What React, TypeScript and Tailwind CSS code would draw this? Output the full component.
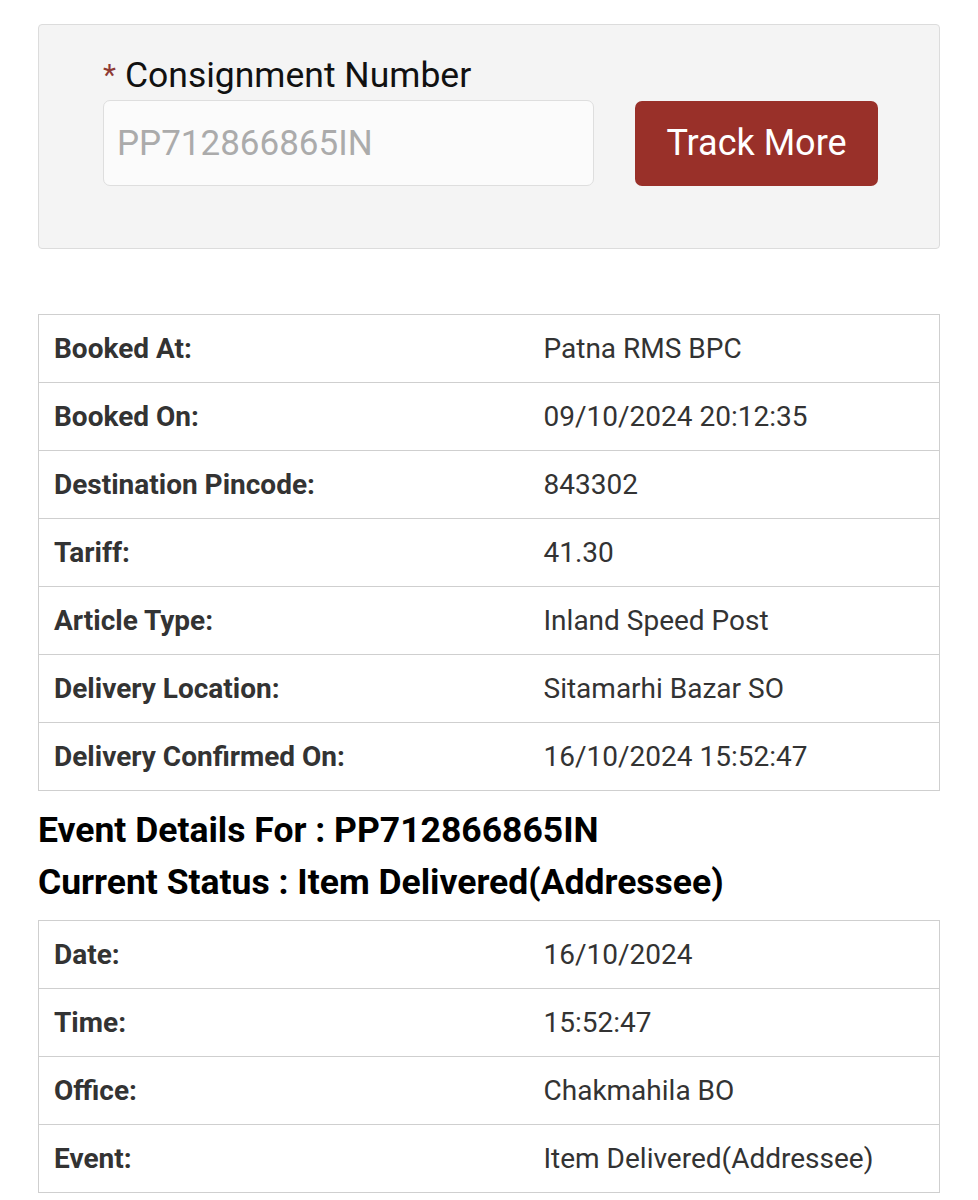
import React from 'react';

const bookingRows: [string, string][] = [
  ['Booked At:', 'Patna RMS BPC'],
  ['Booked On:', '09/10/2024 20:12:35'],
  ['Destination Pincode:', '843302'],
  ['Tariff:', '41.30'],
  ['Article Type:', 'Inland Speed Post'],
  ['Delivery Location:', 'Sitamarhi Bazar SO'],
  ['Delivery Confirmed On:', '16/10/2024 15:52:47'],
];

const eventRows: [string, string][] = [
  ['Date:', '16/10/2024'],
  ['Time:', '15:52:47'],
  ['Office:', 'Chakmahila BO'],
  ['Event:', 'Item Delivered(Addressee)'],
];

const DetailTable: React.FC<{ rows: [string, string][] }> = ({ rows }) => (
  <table className="w-full border-collapse border border-[#cfcfcf] text-[28px] text-[#333]">
    <tbody>
      {rows.map(([label, value]) => (
        <tr key={label} className="h-[68px] border-b border-[#cfcfcf]">
          <td className="w-[505px] pl-[15px] font-bold">{label}</td>
          <td className="pl-0">{value}</td>
        </tr>
      ))}
    </tbody>
  </table>
);

export default function App() {
  return (
    <div className="min-h-[1200px] bg-white px-[38px] pt-[24px] font-['Roboto',sans-serif]">
      {/* Search box */}
      <div className="h-[225px] rounded-[4px] border border-[#dcdcdc] bg-[#f4f4f4] pl-[64px] pt-[28px]">
        <label className="flex items-center text-[35.5px] leading-[44px] text-[#111]">
          <span className="mr-[9px] text-[30px] text-[#8e3a33]">*</span>
          Consignment Number
        </label>
        <div className="mt-[3px] flex items-center gap-[41px]">
          <input
            readOnly
            placeholder="PP712866865IN"
            className="h-[86px] w-[491px] rounded-[7px] border border-[#dedede] bg-[#fbfbfb] px-[13px] text-[35px] placeholder:text-[#ababab] outline-none"
          />
          <button className="h-[85px] w-[243px] rounded-[7px] bg-[#993029] text-[36px] text-white">
            Track More
          </button>
        </div>
      </div>

      <div className="mt-[65px]">
        <DetailTable rows={bookingRows} />
      </div>

      <div className="pb-[12px] pt-[13px] text-[35.5px] font-bold leading-[52px] text-black">
        <p>Event Details For : PP712866865IN</p>
        <p>Current Status : Item Delivered(Addressee)</p>
      </div>

      <DetailTable rows={eventRows} />
    </div>
  );
}
